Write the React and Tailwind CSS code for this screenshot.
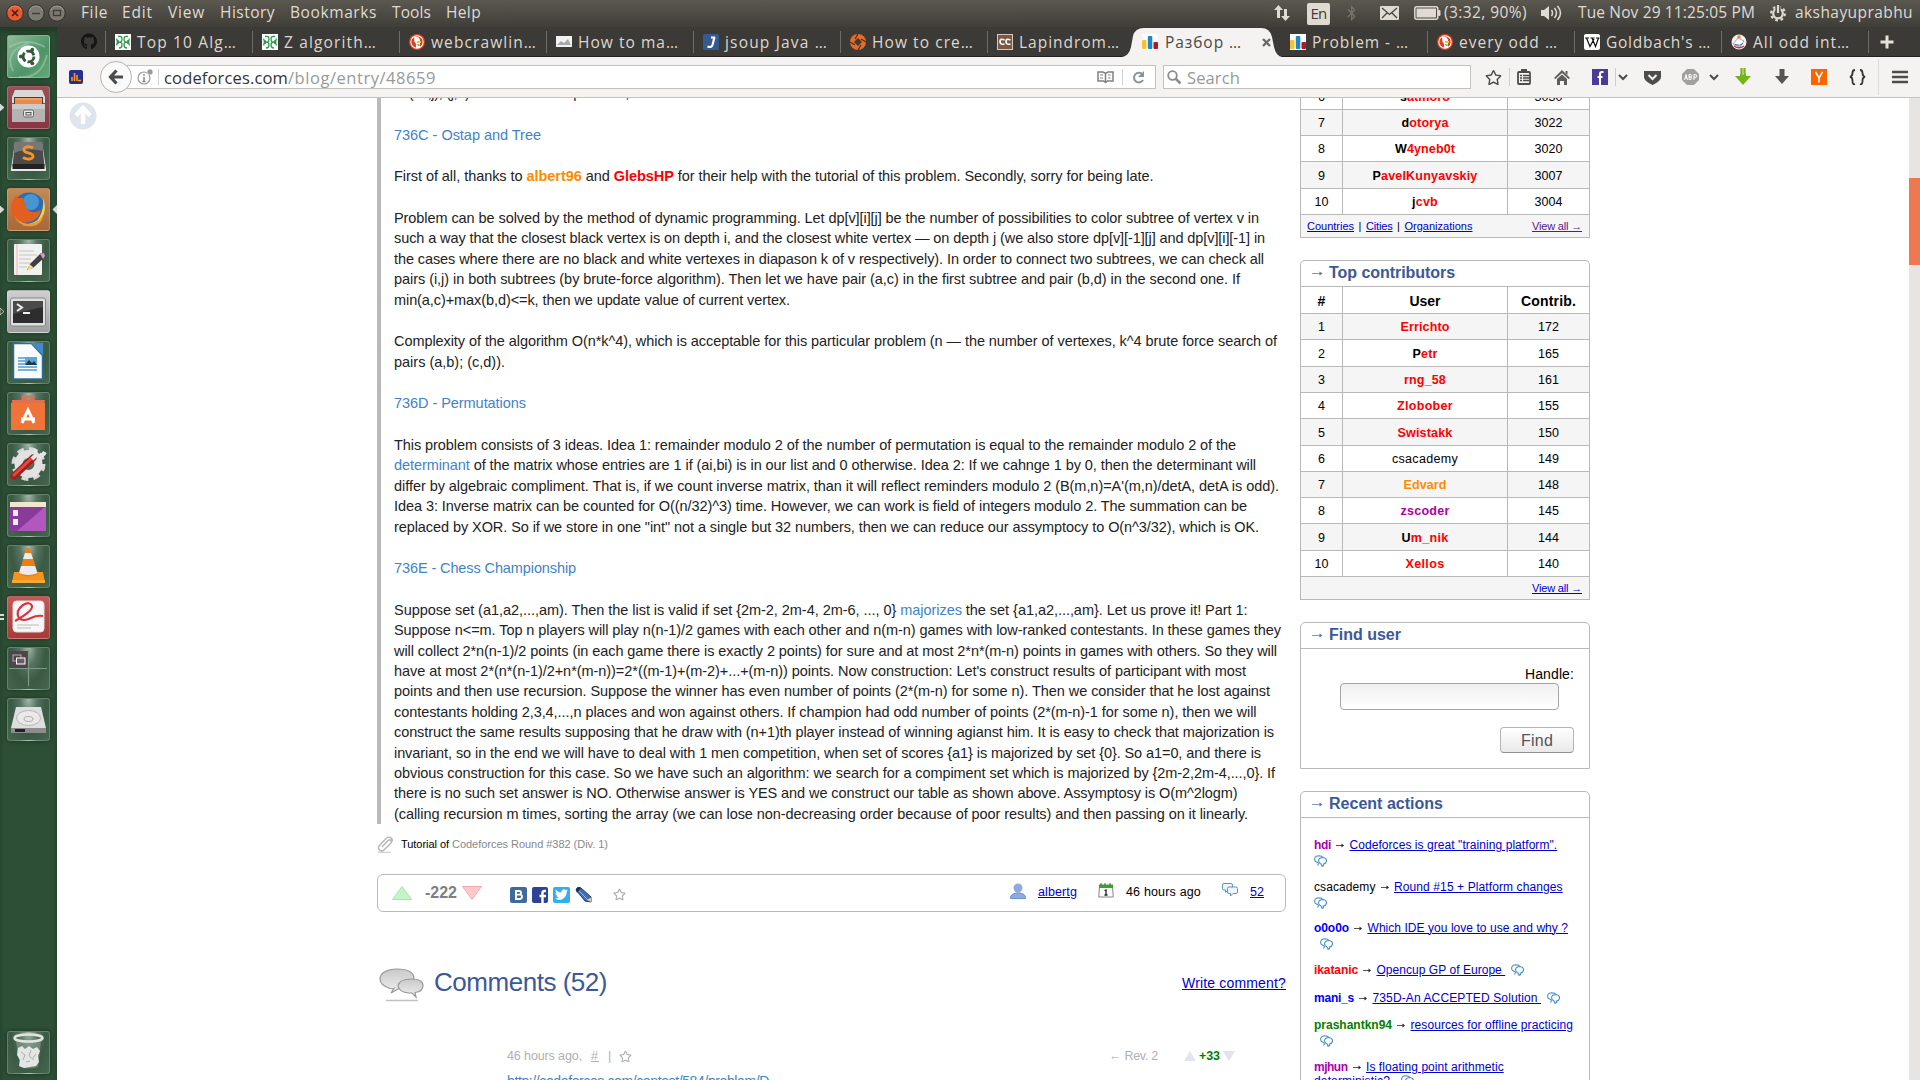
import React, { useLayoutEffect, useRef } from "react";
import { FaGithub, FaBluetoothB, FaRegStar, FaTwitter } from "react-icons/fa";

/* Text whose tracking is adjusted so that it spans exactly w pixels. */
function Fit({ w, className = "", children }) {
  const ref = useRef(null);
  useLayoutEffect(() => {
    const el = ref.current;
    el.style.letterSpacing = "0px";
    const natural = el.getBoundingClientRect().width;
    const n = el.textContent.length;
    if (n > 0) el.style.letterSpacing = (w - natural) / n + "px";
  });
  return (
    <span className="inline-block shrink-0 whitespace-pre" style={{ width: w }}>
      <span ref={ref} className={"whitespace-pre " + className}>{children}</span>
    </span>
  );
}

/* ---------- Desktop top bar ---------- */
const menus = [
  ["File", 27, 14], ["Edit", 31, 15], ["View", 37, 15], ["History", 55, 15],
  ["Bookmarks", 87, 15], ["Tools", 39, 15], ["Help", 35, 0],
];

function WindowButton({ kind }) {
  return (
    <svg width="18" height="18" viewBox="0 0 18 18">
      <circle cx="9" cy="9" r="8.2" fill={kind === "close" ? "#e8592b" : "#7d7a70"} stroke="#35332e" strokeWidth="1" />
      <path d="M2.5 6.5A7 7 0 0 1 15.500 6.500" fill="none" stroke="#fff" strokeOpacity=".25" />
      {kind === "close" && <path d="M6 6l6 6M12 6l-6 6" stroke="#3c2018" strokeWidth="1.6" />}
      {kind === "min" && <path d="M5 9.500h8" stroke="#3c3b37" strokeWidth="1.4" />}
      {kind === "max" && <rect x="5.500" y="6.500" width="7" height="5" fill="none" stroke="#3c3b37" strokeWidth="1.3" />}
    </svg>
  );
}

function MenuBar() {
  return (
    <div className="flex h-[27px] shrink-0 items-center bg-gradient-to-b from-[#5b5850] to-[#403e39] pb-[2px] text-[15.5px] leading-[25px] text-[#dfdbd2]">
      <div className="ml-[6px] mt-[1px] flex w-[75px] gap-[3px]">
        <WindowButton kind="close" /><WindowButton kind="min" /><WindowButton kind="max" />
      </div>
      {menus.map(([t, w, g]) => (
        <span key={t} className="flex" style={{ marginRight: g }}><Fit w={w}>{t}</Fit></span>
      ))}
      <div className="ml-auto flex h-[25px] items-center">
        <svg width="18" height="20" viewBox="0 0 18 20" fill="#dfdbd2" className="mr-[16px] mt-[1px]">
          <path d="M5.500 2L10 7H7v8H4V7H1zM12.500 18L8 13h3V6h3v7h3z" />
        </svg>
        <div className="mr-[15px] mt-[2px] flex h-[22px] w-[23px] items-center justify-center rounded-[2px] bg-[#dfdbd2] text-[15px] text-[#3c3b37]"><Fit w={16}>En</Fit></div>
        <FaBluetoothB className="mr-[22px] mt-[1px] h-[16px] w-[13px] text-[#77746b]" />
        <svg width="19" height="14" viewBox="0 0 19 14" className="mr-[15px] mt-[1px]">
          <rect width="19" height="14" rx="1" fill="#dfdbd2" />
          <path d="M2 2l7.500 6.500L17 2M2 12l5-5M17 12l-5-5" fill="none" stroke="#45433d" strokeWidth="1.3" />
        </svg>
        <svg width="27" height="14" viewBox="0 0 27 14" className="mr-[3px] mt-[1px]">
          <rect x=".8" y=".8" width="23" height="12.400" rx="2" fill="none" stroke="#dfdbd2" strokeWidth="1.500" />
          <rect x="2.500" y="2.500" width="19.500" height="9" fill="#dfdbd2" /><rect x="24" y="4" width="2.500" height="6" rx="1" fill="#dfdbd2" />
        </svg>
        <Fit w={83}>(3:32, 90%)</Fit>
        <svg width="24" height="18" viewBox="0 0 24 18" className="ml-[13px] mr-[14px] mt-[1px]" fill="none" stroke="#dfdbd2" strokeWidth="1.5">
          <path d="M1 6h3l5-4v14l-5-4H1z" fill="#dfdbd2" stroke="none" />
          <path d="M11.500 6q2 3 0 6M14.500 4q4 5 0 10M17.500 2q6 7 0 14" />
        </svg>
        <Fit w={177}>Tue Nov 29 11:25:05 PM</Fit>
        <svg width="18" height="18" viewBox="0 0 18 18" className="ml-[14px] mr-[8px] mt-[1px]" fill="none" stroke="#dfdbd2">
          <circle cx="9" cy="9.500" r="4.800" strokeWidth="2.200" />
          <circle cx="9" cy="9.500" r="6.900" strokeWidth="2.200" strokeDasharray="2.710 2.710" />
          <path d="M9 0v9" stroke="#4d4b44" strokeWidth="5" /><path d="M9 1v8" strokeWidth="2.200" />
        </svg>
        <span className="mr-[7px] flex"><Fit w={118}>akshayuprabhu</Fit></span>
      </div>
    </div>
  );
}

/* ---------- Launcher ---------- */
const launcher = [
  {
    bg: "linear-gradient(135deg,#8fbd9d,#4f9468 60%,#62a97b)",
    art: <g><path d="M2 12Q20 2 38 12M6 36Q-4 16 22 8M12 42Q34 44 40 20" stroke="#a9cfb5" strokeOpacity=".5" strokeWidth="2" fill="none" /><circle cx="21.500" cy="21.500" r="11" fill="#fff" /><circle cx="21.500" cy="21.500" r="5.400" fill="none" stroke="#35583f" strokeWidth="2.800" strokeDasharray="9.300 2" /><circle cx="13.800" cy="21.500" r="1.900" fill="#35583f" /><circle cx="25.300" cy="14.700" r="1.900" fill="#35583f" /><circle cx="25.300" cy="28.300" r="1.900" fill="#35583f" /></g>,
  },
  {
    bg: "linear-gradient(#9a5058,#8a3542)", left: "fill",
    art: <g><path d="M8 4h27l3 7v6H5v-6z" fill="#d9d8d6" /><path d="M7 11h29v8H7z" fill="#4c3f3a" /><path d="M8 12h27v2H8z" fill="#f0a066" /><path d="M8 14h27v5H8z" fill="#e88a48" /><path d="M5 18h33v18H5z" fill="#b5b4b3" /><path d="M5 18h33v5H5z" fill="#cbcac9" /><rect x="16.500" y="24" width="10" height="7" rx="1.500" fill="#e8e8e8" stroke="#666" /><rect x="19" y="26.500" width="5" height="2.500" fill="none" stroke="#555" /></g>,
  },
  {
    art: <g><path d="M8 5h27l4 27v2H4v-2z" fill="#e8e8e8" /><path d="M8 5h27l2.500 24h-32z" fill="#4a4a4a" /><path d="M8 5h27l1.500 9Q21 10 7 16z" fill="#777" /><path d="M5.500 27h32v5h-32z" fill="#222" /><path d="M26 11c-4-2.500-10-1.200-9 2.500 1 3 8.500 2 9 5.500.4 3.500-6 4-10 1.500" stroke="#f5932a" strokeWidth="2.800" fill="none" /></g>,
  },
  {
    bg: "linear-gradient(#c28a55,#a8683a)", left: "fill", right: true,
    art: <g><circle cx="22" cy="20.500" r="16" fill="#2a6cb5" /><circle cx="24" cy="14" r="8" fill="#5fb0e6" fillOpacity=".6" /><path d="M36 10q5 14-3 22-9 8-18 5 15-1 18-9 4-8 3-18z" fill="#f8d33c" /><path d="M6 12l3-5 2 3 6 0q-2 3-1 4l4 1-2 4q5 6 10 5 4 0 6-3-1 10-11 13Q11 37 6 28 2 20 6 12z" fill="#e2601f" /><path d="M7 27q6 11 19 8 8-2 10-9 0 10-10 12Q12 40 7 27z" fill="#f29a2e" /></g>,
  },
  {
    art: <g><rect x="7" y="5" width="28" height="31" rx="1" fill="#f1f1ef" /><path d="M10 5v31" stroke="#efb4b4" /><path d="M12 12h15M12 16h18M12 20h12M12 24h13M12 28h8" stroke="#c4c4c4" strokeWidth="1" /><path d="M20 31l3-6 11-11 4 4-12 11z" fill="#3f3f3f" /><path d="M20 32l2.500-7 4 3.500z" fill="#f0d789" /><path d="M33 15l4-1 1 3-2 3z" fill="#dd8fd0" /></g>,
  },
  {
    bg: "linear-gradient(#cfcfcf,#9e9e9e)", left: "open",
    art: <g><rect x="3.500" y="8" width="35" height="28" rx="2" fill="#dedede" stroke="#888" /><rect x="6" y="11" width="30" height="22" fill="#2d2d2d" /><path d="M6 11h30v6L6 24z" fill="#4a4a4a" /><path d="M10 14l5 3.500-5 3.500M16 23h7" stroke="#eee" strokeWidth="2" fill="none" /></g>,
  },
  {
    art: <g><path d="M6.500 2.500h18l11 12V38h-29z" fill="#f8fafc" stroke="#2a6da3" strokeWidth="1.500" /><path d="M24 2h12v12z" fill="#3d8bc8" /><path d="M11 17h7M11 20h7M11 23h7M11 26h19M11 29h19" stroke="#4f9cd4" strokeWidth="1.700" /><rect x="18" y="16" width="12" height="8" fill="#5ba7d8" /><path d="M18 24l4-5 3 3 2-2 3 4z" fill="#26383f" /></g>,
  },
  {
    art: <g><path d="M16 10V5h10v5" fill="none" stroke="#e2704e" strokeWidth="2.500" /><path d="M5 8h33l-1 5H5z" fill="#e2704e" /><rect x="4" y="11" width="34" height="27" fill="#f07338" /><path d="M15 31l6-13 6 13M14 27h14" fill="none" stroke="#fff" strokeWidth="3" /></g>,
  },
  {
    art: <g><circle cx="21.500" cy="21" r="14.500" fill="none" stroke="#d9d9d9" strokeWidth="5" strokeDasharray="6.500 4.890" /><circle cx="21.500" cy="21" r="10" fill="none" stroke="#e2e2e2" strokeWidth="8" /><path d="M7 33L26 15" stroke="#a81c1c" strokeWidth="7" strokeLinecap="round" /><path d="M7 32L25 15" stroke="#e04a42" strokeWidth="3" strokeLinecap="round" /><path d="M25 16l5-5M29 6q-2 5 3 7 4 0 6-4" stroke="#e5e5e5" strokeWidth="4" fill="none" /></g>,
  },
  {
    art: <g><rect x="3" y="8" width="36" height="29" rx="1.500" fill="#8a3a9a" /><path d="M10 37L39 12v25z" fill="#bd62c8" fillOpacity=".75" /><path d="M3 8h36v5H3z" fill="#eee8cf" /><path d="M6 16h5v6H6zM6 25h5v6H6z" fill="#f5eef7" /></g>,
  },
  {
    art: <g><path d="M7 27h29l2 11H5z" fill="#f5931e" /><path d="M5 35h33v3H5z" fill="#f7a833" /><path d="M19 4q2-2 4 0l8 25q-9 5-19 0z" fill="#ee7d18" /><path d="M18 8h6l2 6h-10zM14 21h14l2.500 7q-9 4-18.500 0z" fill="#ececec" /></g>,
  },
  {
    bg: "linear-gradient(#c25a58,#a83a3a)", left: "double",
    art: <g><rect x="6" y="5" width="31" height="31" rx="3.500" fill="#f7f7f7" stroke="#ddd" /><path d="M8 25Q26 15 25 10 23 5 16 9 8 15 12 22q4 4 12 0 6-3 12-2" stroke="#d9343a" strokeWidth="2.200" fill="none" /><path d="M10 29h22M10 32h14" stroke="#cfcfcf" strokeWidth="1.500" /></g>,
  },
  {
    art: <g><rect x="2" y="4" width="19" height="18" fill="#4d4548" /><path d="M21.500 2v37M2 21.500h38" stroke="#7d9a86" strokeWidth="1.200" /><rect x="6" y="8" width="8" height="6" fill="none" stroke="#b9a9b4" /><rect x="9.500" y="11" width="8.500" height="6" fill="#6d5a68" stroke="#fff" /></g>,
  },
  {
    art: <g><path d="M9 9h25l5 21H4z" fill="#dedede" /><path d="M4 30h35v5H4z" fill="#8d8d8d" /><path d="M8 31h10v3H8z" fill="#222" /><ellipse cx="21.500" cy="20" rx="12" ry="7.500" fill="#e9e9e9" stroke="#b8b8b8" /><ellipse cx="21.500" cy="21" rx="4.500" ry="2.500" fill="none" stroke="#aaa" /></g>,
  },
];
const trash = {
  art: <g><path d="M9 10h25l-3 26q-9 3-18 0z" fill="#9fb0a5" fillOpacity=".45" /><ellipse cx="21.500" cy="7" rx="14" ry="3.500" fill="none" stroke="#dfe5e1" strokeWidth="2.500" /><path d="M11 17l4-2 3 3 4-3 4 3 4-2 3 4-2 5 1 6-3 4-6 1-6 1-5-2 1-6-3-5z" fill="#e4e6e4" /><path d="M14 21l4 3-2 5M24 19l-2 6 5 4M29 23l-3 4M19 31l4-1" stroke="#a9afab" fill="none" /></g>,
};

function Tile({ item }) {
  return (
    <div className="relative ml-[7px] h-[43px] w-[43px] shrink-0">
      <div
        className="h-full w-full rounded-[3px] border border-[#ffffff33] shadow-[0_0_4px_#00000066]"
        style={{ background: item.bg || "radial-gradient(ellipse at 50% 0,#a3b8a9 0,#567361 30%,#3a5a44 60%,#45664f)" }}
      />
      <svg width="43" height="43" viewBox="0 0 43 43" className="absolute inset-0">{item.art}</svg>
      {item.left && (
        <svg width="5" height="9" viewBox="0 0 5 9" className="absolute -left-[7px] top-[17px]">
          {item.left === "double"
            ? <path d="M0 2h4M0 6h4" stroke="#ddd" strokeWidth="1.800" />
            : <path d="M0 1l4 3.500L0 8z" fill={item.left === "fill" ? "#d8dcd9" : "none"} stroke="#d8dcd9" strokeWidth=".8" />}
        </svg>
      )}
      {item.right && (
        <svg width="5" height="9" viewBox="0 0 5 9" className="absolute -right-[7px] top-[17px]"><path d="M5 0L.5 4.500 5 9z" fill="#d8dcd9" /></svg>
      )}
    </div>
  );
}

function Launcher() {
  return (
    <div className="flex w-[57px] shrink-0 flex-col gap-2 bg-[#2c4f35] pb-[6px] pt-[8px] shadow-[inset_0_5px_5px_#00000044]">
      {launcher.map((it, i) => <Tile key={i} item={it} />)}
      <div className="mt-auto"><Tile item={trash} /></div>
    </div>
  );
}

/* ---------- Browser chrome ---------- */
const favicon = {
  gfg: <g><rect width="16" height="16" fill="#fff" /><path d="M3 2.500Q7 1.500 7 5T4 8H1.500M4 8q3 0 3 3t-3 3M2 4.500Q1 7 4 7M2 11.500Q1 9 4 9M13 2.500Q9 1.500 9 5t3 3h2.500M12 8q-3 0-3 3t3 3M14 4.500Q15 7 12 7M14 11.500Q15 9 12 9" stroke="#2f9a46" fill="none" strokeWidth="1.300" /></g>,
  duck: <g><circle cx="8" cy="8" r="8" fill="#d9421e" /><circle cx="8" cy="8" r="6.700" fill="#fff" /><circle cx="8" cy="8" r="5.700" fill="#d9421e" /><path d="M5 3q5-1.500 6 3v8H7Q7.500 9 5.500 8z" fill="#fff" /><path d="M8 7h4v2H8z" fill="#f7c325" /><path d="M8 10l4 1-3 1z" fill="#3f9a3c" /></g>,
  img: <g><rect y="2" width="16" height="11" fill="#f2f2f2" /><path d="M1 11l4-4 3 2 4-4 3 6z" fill="#a7a9a9" /></g>,
  jsoup: <g><rect width="16" height="16" rx="1.500" fill="#36598f" /><path d="M11.500 3L9.500 11Q8.500 14 4.500 12.500M8 3.500h4" stroke="#fff" strokeWidth="2.200" fill="none" /></g>,
  hash: <g><circle cx="8" cy="8" r="8" fill="#ec6b23" /><path d="M8 4l4 4-4 4-4-4z" fill="#3c3b37" /><path d="M8 0L5 5M16 8l-5-3M8 16l3-5M0 8l5 3" stroke="#3c3b37" strokeWidth="1.300" /></g>,
  cc: <g><rect x=".5" y=".5" width="15" height="15" fill="#7a5844" stroke="#d8c9ba" /><path d="M7.500 6Q3 4 3 7.500T7.500 10M13.500 6Q9 4 9 7.500t4.500 2.500" fill="none" stroke="#fff" strokeWidth="1.700" /></g>,
  cf: <g><rect width="16" height="16" fill="#fff" /><rect x="0" y="6" width="4.500" height="9" rx="1" fill="#f4c430" /><rect x="5.800" y="2" width="4.500" height="13" rx="1" fill="#1f87c9" /><rect x="11.500" y="8" width="4.500" height="7" rx="1" fill="#b01822" /></g>,
  wiki: <g><rect width="16" height="16" rx="2" fill="#fff" /><path d="M1 4h4M6.500 4h4M12 4h3.500M2.500 4l3.500 8.500L10 5M8 4l3.500 8.500L14.500 4" stroke="#111" strokeWidth="1.200" fill="none" /></g>,
  math: <g><circle cx="8" cy="8" r="7.500" fill="#f5f2f0" /><path d="M2 10l5-6 6 3-4 6z" fill="#fff" stroke="#7d90c4" strokeWidth=".8" /><path d="M3 12q5 3.500 10 0" stroke="#c33" fill="none" strokeWidth="1.500" /><path d="M4 10.500q5 2 8-1" stroke="#3f62b0" fill="none" /><circle cx="8" cy="3" r="1.800" fill="#e08a3c" /></g>,
};

function Tab({ icon, label, w, width, last }) {
  return (
    <div className="flex h-full shrink-0 items-center" style={{ width }}>
      <div className={"h-[22px] w-px " + (last ? "bg-transparent" : "bg-[#6f6d67]")} />
      <svg width="16" height="16" viewBox="0 0 16 16" className="ml-[9px] mr-[6px]">{favicon[icon]}</svg>
      <Fit w={w}>{label}</Fit>
    </div>
  );
}

function TabStrip() {
  return (
    <div className="flex h-[30px] shrink-0 items-center border-b border-[#22211f] bg-[#3c3a36] text-[15.5px] leading-[30px] text-[#dcd8cf]">
      <div className="flex w-[48px] justify-end pr-[8px]"><FaGithub className="h-[17px] w-[16px] text-[#151515]" /></div>
      <Tab icon="gfg" label="Top 10 Alg…" w={100} width={147} />
      <Tab icon="gfg" label="Z algorith…" w={93} width={147} />
      <Tab icon="duck" label="webcrawlin…" w={106} width={147} />
      <Tab icon="img" label="How to ma…" w={101} width={147} />
      <Tab icon="jsoup" label="jsoup Java …" w={103} width={147} />
      <Tab icon="hash" label="How to cre…" w={102} width={147} />
      <Tab icon="cc" label="Lapindrom…" w={101} width={135} />
      <div className="relative z-10 -mb-px flex h-[30px] w-[160px] shrink-0 items-center">
        <svg width="160" height="30" viewBox="0 0 160 30" className="absolute inset-0">
          <path d="M0 30Q7 29 9 20L11 9Q13 1 22 1H139Q148 1 150 10L152 20Q154 29 160 30z" fill="#f4f3f1" />
        </svg>
        <svg width="16" height="16" viewBox="0 0 16 16" className="relative ml-[20px] mr-[7px]">{favicon.cf}</svg>
        <span className="relative flex text-[#4a4945]"><Fit w={77}>Разбор …</Fit></span>
        <svg width="9" height="9" viewBox="0 0 9 9" className="relative ml-[20px]"><path d="M1 1l7 7M8 1L1 8" stroke="#6b6a66" strokeWidth="2.400" /></svg>
      </div>
      <div className="relative z-20 -ml-[2px] flex h-full">
        <Tab icon="cf" label="Problem - …" w={97} width={147} last />
        <Tab icon="duck" label="every odd …" w={99} width={147} />
        <Tab icon="wiki" label="Goldbach's …" w={105} width={147} />
        <Tab icon="math" label="All odd int…" w={97} width={147} />
      </div>
      <div className="h-[22px] w-px bg-[#6f6d67]" />
      <svg width="14" height="14" viewBox="0 0 14 14" className="ml-[11px]"><path d="M7 .5v13M.5 7h13" stroke="#e6e3da" strokeWidth="3" /></svg>
    </div>
  );
}

const dark = "#4c4c4c";
function Chevron() {
  return <svg width="10" height="7" viewBox="0 0 10 7"><path d="M1 1l4 4 4-4" fill="none" stroke={dark} strokeWidth="2" /></svg>;
}
function Cell({ w, children }) {
  return <div className="flex h-full shrink-0 items-center justify-center" style={{ width: w }}>{children}</div>;
}

function Toolbar() {
  return (
    <div className="flex h-[41px] shrink-0 items-center border-b border-[#c4c2bf] bg-[#f4f3f1] text-[16.500px] leading-[22px]">
      <svg width="14" height="14" viewBox="0 0 14 14" className="ml-[12px]">
        <rect width="14" height="14" rx="2" fill="#2b2f8c" /><path d="M3 11V7M5.500 11V3M8 11V5M9 10.500h3" stroke="#f39a1e" strokeWidth="1.600" />
      </svg>
      <div className="relative z-10 ml-[17px] flex h-[32px] w-[32px] shrink-0 items-center justify-center rounded-full border border-[#b5b3b0] bg-[#fafafa]">
        <svg width="16" height="16" viewBox="0 0 16 16"><path d="M8.500 1.500L2.500 8l6 6.500M3 8h12" fill="none" stroke="#4a4a4a" strokeWidth="3.200" /></svg>
      </div>
      <div className="-ml-[10px] flex h-[24px] w-[1034px] shrink-0 items-center border border-[#c4c2bf] bg-white">
        <svg width="16" height="16" viewBox="0 0 16 16" className="ml-[14px]"><circle cx="7" cy="9" r="6" fill="none" stroke="#999" strokeWidth="1.200" /><circle cx="13" cy="3" r="3" fill="#999" stroke="#fff" strokeWidth=".6" /><path d="M7 8v4.500M7 5v1.800M5.500 12.500h3" stroke="#888" strokeWidth="1.500" /></svg>
        <div className="ml-[5px] mr-[5px] h-[16px] w-px bg-[#d0d0d0]" />
        <span className="pt-[2px] text-[#333]"><Fit w={124}>codeforces.com</Fit></span>
        <span className="pt-[2px] text-[#999]"><Fit w={148}>/blog/entry/48659</Fit></span>
        <svg width="17" height="14" viewBox="0 0 17 14" className="ml-auto" fill="none" stroke="#808080" strokeWidth="1.500"><path d="M8.500 12.500L6.500 11H1V2h5l2.500 1.500L11 2h5v9h-5.500zM8.500 4v8" /><path d="M3 5h3M3 8h3M11 5h2.500M11 8h2.500" strokeWidth="1" /></svg>
        <div className="ml-[8px] mr-[9px] h-[16px] w-px bg-[#d0d0d0]" />
        <svg width="13" height="13" viewBox="0 0 13 13" className="mr-[10px]"><path d="M10.500 3.500A4.800 4.800 0 1 0 11 9" fill="none" stroke="#8a9199" strokeWidth="2" /><path d="M12 0v6H6z" fill="#8a9199" /></svg>
      </div>
      <div className="ml-[7px] flex h-[24px] w-[308px] shrink-0 items-center border border-[#c4c2bf] bg-white">
        <svg width="15" height="15" viewBox="0 0 15 15" className="ml-[3px] mr-[5px]"><circle cx="5.500" cy="5.500" r="4.300" fill="none" stroke="#8c8c8c" strokeWidth="1.800" /><path d="M8.500 8.500l5 5" stroke="#8c8c8c" strokeWidth="2.500" /></svg>
        <span className="pt-[2px] text-[#999]"><Fit w={53}>Search</Fit></span>
      </div>
      <div className="ml-[13px] flex h-full items-center">
        <Cell w={18}><FaRegStar className="h-[17px] w-[17px]" color={dark} /></Cell>
        <Cell w={14}><div className="h-[18px] w-px bg-[#d0cecb]" /></Cell>
        <Cell w={16}><svg width="14" height="16" viewBox="0 0 14 16"><rect x="1" y="3" width="12" height="12" rx="1" fill="none" stroke={dark} strokeWidth="1.800" /><rect x="4" y="0" width="6" height="4" fill={dark} /><path d="M3 6.500h2M3 9h2M3 11.500h2M6 6.500h6M6 9h6M6 11.500h6" stroke={dark} strokeWidth="1.300" /></svg></Cell>
        <Cell w={60}><svg width="16" height="15" viewBox="0 0 16 15"><path d="M0 8L8 0l8 8-1.500 1L8 3 1.500 9zM3 9l5-4.500L13 9v6h-3v-4H6v4H3z" fill="#5d5d5d" /><path d="M11.500 1h2v4l-2-2z" fill="#5d5d5d" /></svg></Cell>
        <Cell w={16}><svg width="16" height="16" viewBox="0 0 16 16"><rect width="16" height="16" fill="#4a3c96" /><path d="M11.500 3H10Q8 3 8 5v11M5.500 8h5" stroke="#fff" strokeWidth="2" fill="none" /></svg></Cell>
        <div className="ml-[7px] h-[18px] w-px bg-[#d0cecb]" />
        <Cell w={14}><Chevron /></Cell>
        <Cell w={44}><svg width="17" height="15" viewBox="0 0 17 15"><path d="M0 1h17v6q0 4-8.500 8Q0 11 0 7z" fill={dark} /><path d="M4.500 5l4 4 4-4" stroke="#f4f3f1" fill="none" strokeWidth="2" /></svg></Cell>
        <div className="ml-[7px]"><Cell w={18}><svg width="17" height="16" viewBox="0 0 17 16"><path d="M5 0h7l5 5v6l-5 5H5l-5-5V5z" fill="#a0a0a0" /><path d="M2.500 11l1.500-5.500L5.500 11M3 9h2M7 10.500v-5q3 0 3 1.200T7 8q3 0 3 1.300T7 10.500M12 11V5.500q3 0 3 1.500t-3 1.500" stroke="#fff" fill="none" /></svg></Cell></div>
        <Cell w={30}><Chevron /></Cell>
        <Cell w={28}><svg width="16" height="18" viewBox="0 0 16 18"><path d="M5 0h6v8h5l-8 9-8-9h5z" fill="#72b615" /><path d="M5 0v6M8 0v7M11 0v6" stroke="#f4f3f1" strokeWidth=".8" /></svg></Cell>
        <Cell w={49}><svg width="14" height="16" viewBox="0 0 14 16"><path d="M4.500 0h5v7H14l-7 8-7-8h4.500z" fill="#555" /></svg></Cell>
        <Cell w={26}><svg width="16" height="16" viewBox="0 0 16 16"><rect width="16" height="16" fill="#fb6500" /><path d="M4.500 3L8 9l3.500-6M8 9v4.500" stroke="#fff" strokeWidth="1.500" fill="none" /></svg></Cell>
        <Cell w={50}><svg width="17" height="16" viewBox="0 0 17 16"><path d="M6 1Q3.500 1 3.500 4T1 8q2.500 0 2.500 4T6 15M11 1q2.500 0 2.500 3T16 8q-2.500 0-2.500 4T11 15" fill="none" stroke="#333" strokeWidth="1.800" /></svg></Cell>
        <div className="-ml-[4px] h-[36px] w-px bg-[#dddbd8]" />
        <Cell w={41}><svg width="16" height="14" viewBox="0 0 16 14"><path d="M0 2h16M0 7h16M0 12h16" stroke={dark} strokeWidth="2.600" /></svg></Cell>
      </div>
    </div>
  );
}

/* ---------- Article ---------- */
const L = ({ children }) => <span className="text-[#4183c9]">{children}</span>;
const paragraphs = [
  [[147, <L>736C - Ostap and Tree</L>]],
  [[759.500, <>First of all, thanks to <b className="text-[#ff8c00]">albert96</b> and <b className="text-[#ff0000]">GlebsHP</b> for their help with the tutorial of this problem. Secondly, sorry for being late.</>]],
  [
    [865, "Problem can be solved by the method of dynamic programming. Let dp[v][i][j] be the number of possibilities to color subtree of vertex v in"],
    [871, "such a way that the closest black vertex is on depth i, and the closest white vertex — on depth j (we also store dp[v][-1][j] and dp[v][i][-1] in"],
    [870, "the cases where there are no black and white vertexes in diapason k of v respectively). In order to connect two subtrees, we can check all"],
    [846, "pairs (i,j) in both subtrees (by brute-force algorithm). Then let we have pair (a,c) in the first subtree and pair (b,d) in the second one. If"],
    [396, "min(a,c)+max(b,d)<=k, then we update value of current vertex."],
  ],
  [
    [883, "Complexity of the algorithm O(n*k^4), which is acceptable for this particular problem (n — the number of vertexes, k^4 brute force search of"],
    [111, "pairs (a,b); (c,d))."],
  ],
  [[132, <L>736D - Permutations</L>]],
  [
    [842, "This problem consists of 3 ideas. Idea 1: remainder modulo 2 of the number of permutation is equal to the remainder modulo 2 of the"],
    [862, <><L>determinant</L> of the matrix whose entries are 1 if (ai,bi) is in our list and 0 otherwise. Idea 2: If we cahnge 1 by 0, then the determinant will</>],
    [885, "differ by algebraic compliment. That is, if we count inverse matrix, than it will reflect reminders modulo 2 (B(m,n)=A'(m,n)/detA, detA is odd)."],
    [853, "Idea 3: Inverse matrix can be counted for O((n/32)^3) time. However, we can work is field of integers modulo 2. The summation can be"],
    [865, "replaced by XOR. So if we store in one \"int\" not a single but 32 numbers, then we can reduce our assymptocy to O(n^3/32), which is OK."],
  ],
  [[182, <L>736E - Chess Championship</L>]],
  [
    [853.500, <>Suppose set (a1,a2,...,am). Then the list is valid if set {"{2m-2, 2m-4, 2m-6, ..., 0}"} <L>majorizes</L> the set {"{a1,a2,...,am}"}. Let us prove it! Part 1:</>],
    [887, "Suppose n<=m. Top n players will play n(n-1)/2 games with each other and n(m-n) games with low-ranked contestants. In these games they"],
    [883, "will collect 2*n(n-1)/2 points (in each game there is exactly 2 points) for sure and at most 2*n*(m-n) points in games with others. So they will"],
    [852, "have at most 2*(n*(n-1)/2+n*(m-n))=2*((m-1)+(m-2)+...+(m-n)) points. Now construction: Let's construct results of participant with most"],
    [876, "points and then use recursion. Suppose the winner has even number of points (2*(m-n) for some n). Then we consider that he lost against"],
    [862.500, "contestants holding 2,3,4,...,n places and won against others. If champion had odd number of points (2*(m-n)-1 for some n), then we will"],
    [880, "construct the same results supposing that he draw with (n+1)th player instead of winning agianst him. It is easy to check that majorization is"],
    [867, "invariant, so in the end we will have to deal with 1 men competition, when set of scores {a1} is majorized by set {0}. So a1=0, and there is"],
    [881, "obvious construction for this case. So we have such an algorithm: we search for a compiment set which is majorized by {2m-2,2m-4,...,0}. If"],
    [843.500, "there is no such set answer is NO. Otherwise answer is YES and we construct our table as shown above. Assymptosy is O(m^2logm)"],
    [854, "(calling recursion m times, sorting the array (we can lose non-decreasing order because of poor results) and then passing on it linearly."],
  ],
];

function Article() {
  return (
    <div className="flex h-[726px] flex-col justify-end gap-[21.400px] overflow-hidden border-l-4 border-[#b9b9b9] pl-[13px] text-[14.500px] leading-[20.370px] text-[#222]">
      <div className="shrink-0"><Fit w={235}>{"    (i.e,j), (j,e)                            p            ,"}</Fit></div>
      {paragraphs.map((p, i) => (
        <div key={i} className="shrink-0">
          {p.map(([w, t], j) => <div key={j} className="h-[20.370px]"><Fit w={w}>{t}</Fit></div>)}
        </div>
      ))}
    </div>
  );
}

function Bubbles({ w, h }) {
  return (
    <svg width={w} height={h} viewBox="0 0 16 14" fill="#eef5fc" stroke="#5b93c9" strokeWidth="1">
      <path d="M2 1h7q1.500 0 1.500 1.500V6q0 1.500-1.500 1.500H6L3.500 10V7.500H2Q.5 7.500.5 6V2.500Q.5 1 2 1z" />
      <path d="M7 4.500h7q1.500 0 1.500 1.500v3.500q0 1.500-1.500 1.500h-3l-2.500 2.500V11H7q-1.500 0-1.500-1.500V6Q5.500 4.500 7 4.500z" />
    </svg>
  );
}

function ActionBubbles() {
  return (
    <svg width="13" height="12" viewBox="0 0 13 12" fill="#fff" stroke="#4a90c8" strokeWidth="1.100">
      <path d="M4 7.500Q.6 7 .6 4 1 .8 5 .7 8 .7 9 2.500M4 7.500Q5 9 3.500 10.500" />
      <path d="M9 2.500q3.500.5 3.500 3.200T9.500 9q.5 2-1.500 2.300Q8 10 7 9 4.500 8 4.500 5.500 5 2.500 9 2.500z" />
    </svg>
  );
}

function VoteBar() {
  return (
    <div className="mt-[20px] flex h-[38px] items-center rounded-[6px] border border-[#b9b9b9]">
      <svg width="20" height="14" viewBox="0 0 20 14" className="ml-[14px]"><path d="M10 .5L19.500 13.500H.5z" fill="#c3f5c6" stroke="#a9e0ad" /></svg>
      <span className="ml-[13px] text-[16px] font-bold text-[#808080]"><Fit w={32}>-222</Fit></span>
      <svg width="20" height="14" viewBox="0 0 20 14" className="ml-[5px]"><path d="M10 13.500L.5.500h19z" fill="#ffc9cb" stroke="#f5aaac" /></svg>
      <div className="ml-[28px] flex h-full items-center gap-[5px] pt-[3px]">
        <svg width="17" height="16" viewBox="0 0 17 16"><rect width="17" height="16" rx="2" fill="#3e6a9c" /><path d="M6 4h3.500q1.500 0 1.500 1.800T9.500 7.600H6zm0 3.600h4q2 0 2 2T10 12H6z" fill="none" stroke="#fff" strokeWidth="1.900" /></svg>
        <svg width="16" height="16" viewBox="0 0 16 16"><rect width="16" height="16" rx="2" fill="#2c4493" /><path d="M14 4h-1.500q-2 0-2 2v10M7.500 9H14" stroke="#fff" strokeWidth="2.400" fill="none" /></svg>
        <div className="flex h-[16px] w-[17px] items-center justify-center rounded-[2px] bg-[#2db0f2]"><FaTwitter className="h-[13px] w-[13px] text-white" /></div>
        <svg width="17" height="16" viewBox="0 0 17 16"><path d="M1 3Q2-1 6 1l10 9v5l-6-1z" fill="#3a72b4" stroke="#1f3f70" /><path d="M1 3Q2-1 6 1L2 6z" fill="#1d3050" /><path d="M4 4l9 9" stroke="#8fb8e6" /><path d="M16 15v-4.500L12 13z" fill="#efc98a" /></svg>
      </div>
      <FaRegStar className="ml-[21px] mt-[2px] h-[13px] w-[13px] text-[#aaa]" />
      <div className="mr-[21px] ml-auto flex items-center pb-[2px] text-[12.500px] leading-[18px] text-black">
        <svg width="16" height="16" viewBox="0 0 16 16" className="mb-[3px]"><circle cx="8" cy="5" r="4.500" fill="#8faadf" /><path d="M.5 15.500Q0 11 6 10h4q6 1 5.500 5.500z" fill="#8faadf" stroke="#6f92d4" /></svg>
        <span className="ml-[12px] text-[#0000cc]"><Fit w={39} className="underline">albertg</Fit></span>
        <svg width="16" height="15" viewBox="0 0 16 15" className="mb-[3px] ml-[21px]"><path d="M1.500 4h13l.8 10H.7z" fill="#fafafa" stroke="#888" /><path d="M1 1.500h14V5H1z" fill="#39a329" /><path d="M3 0v2.500M7 0v2.500M12 0v2.500" stroke="#555" /><path d="M6.500 7.500L8 7v5M6.500 12h3" stroke="#222" strokeWidth="1.300" fill="none" /></svg>
        <span className="ml-[12px]"><Fit w={75}>46 hours ago</Fit></span>
        <span className="mb-[5px] ml-[21px]"><Bubbles w={16} h={15} /></span>
        <span className="ml-[12px] text-[#0000cc]"><Fit w={14} className="underline">52</Fit></span>
      </div>
    </div>
  );
}

function MainColumn() {
  return (
    <div className="ml-[280px] w-[909px] shrink-0">
      <Article />
      <div className="mt-[10px] flex h-[20px] items-center text-[11px] leading-[20px] text-black">
        <svg width="17" height="17" viewBox="0 0 17 17" className="mr-[7px]" fill="none" stroke="#b5b5b5" strokeWidth="1.400"><path d="M5 11l6-6.500q2-1.500 3 0t-.5 3L7 14q-2.500 2-4.500 0t0-4.500L9 2.500q2.500-2 4.500-1t2 4" /><path d="M1 16.300h13" strokeWidth=".8" /></svg>
        <Fit w={48}>Tutorial of</Fit>
        <span className="ml-[3px] text-[#888]"><Fit w={156}>Codeforces Round #382 (Div. 1)</Fit></span>
      </div>
      <VoteBar />
      <div className="mt-[48px] flex h-[44px] items-center">
        <svg width="45" height="34" viewBox="0 0 45 34" className="ml-[2px] mt-[6px]" stroke="#989898" strokeWidth="1.200">
          <defs><linearGradient id="cb" x1="0" y1="0" x2="0" y2="1"><stop offset="0" stopColor="#c9c9c9" /><stop offset="1" stopColor="#efefef" /></linearGradient></defs>
          <path d="M18 1C8 1 1 5 1 11q0 6 10 9.500 3 .5 4 0L12 25l8-4.500Q35 19 35 11 35 1 18 1z" fill="url(#cb)" />
          <path d="M32 11q-12 0-13 7 1 6 11 7h3l4 4-1-4.500q8-1 8-7Q44 11 32 11z" fill="url(#cb)" />
          <path d="M7 32.500h32" strokeOpacity=".6" strokeWidth="1.500" />
        </svg>
        <span className="ml-[10px] text-[26px] leading-[30px] text-[#3b5998]"><Fit w={173}>Comments (52)</Fit></span>
        <span className="ml-auto mt-[2px] text-[14px] leading-[20px] text-[#0000cc]"><Fit w={104} className="underline">Write comment?</Fit></span>
      </div>
      <div className="mt-[42px] flex h-[20px] items-center pl-[130px] text-[12.500px] leading-[20px] text-[#b0b0b0]">
        <Fit w={75}>46 hours ago,</Fit>
        <span className="ml-[9px]"><Fit w={8} className="underline">#</Fit></span>
        <span className="ml-[9px]">|</span>
        <FaRegStar className="ml-[8px] h-[13px] w-[13px]" />
        <span className="ml-auto"><Fit w={49}>← Rev. 2</Fit></span>
        <svg width="12" height="10" viewBox="0 0 12 10" className="ml-[26px]"><path d="M6 0l6 10H0z" fill="#e2e4f2" /></svg>
        <b className="ml-[3px] text-[#008000]"><Fit w={21}>+33</Fit></b>
        <svg width="12" height="10" viewBox="0 0 12 10" className="ml-[3px] mr-[51px]"><path d="M6 10L0 0h12z" fill="#e2e4f2" /></svg>
      </div>
      <div className="h-[20px] pl-[130px] pt-[5px] text-[14px] leading-[20px]"><L><Fit w={262}>http://codeforces.com/contest/584/problem/D</Fit></L></div>
    </div>
  );
}

/* ---------- Sidebar ---------- */
const R = "text-[#ff0000]";
const rated = [
  ["6", "s", "atmoro", R, 50, "3030", 26], ["7", "d", "otorya", R, 47, "3022", 26],
  ["8", "W", "4yneb0t", R, 60, "3020", 26], ["9", "P", "avelKunyavskiy", R, 105, "3007", 27], ["10", "j", "cvb", R, 26, "3004", 26],
];
const contributors = [
  ["1", "", "Errichto", R, 49, "172", 26], ["2", "P", "etr", R, 25, "165", 27], ["3", "", "rng_58", R, 42, "161", 26],
  ["4", "", "Zlobober", R, 56, "155", 26], ["5", "", "Swistakk", R, 55, "150", 27], ["6", "", "csacademy", "font-normal text-black", 66, "149", 26],
  ["7", "", "Edvard", "text-[#ff8c00]", 43, "148", 26], ["8", "", "zscoder", "text-[#aa00aa]", 49, "145", 26],
  ["9", "U", "m_nik", R, 47, "144", 27], ["10", "", "Xellos", R, 39, "140", 26],
];

function Row({ r, shade }) {
  const [n, first, rest, color, w, val, h] = r;
  return (
    <div className={"grid grid-cols-[42px_165px_1fr] border-b border-[#b9b9b9] text-center text-[12.500px] text-black " + (shade ? "bg-[#f5f5f5]" : "bg-white")} style={{ height: h }}>
      <div className="flex items-center justify-center border-r border-[#b9b9b9] pt-[2px]">{n}</div>
      <div className="flex items-center justify-center border-r border-[#b9b9b9] pt-[2px] font-bold"><Fit w={w}>{first}<span className={color}>{rest}</span></Fit></div>
      <div className="flex items-center justify-center pt-[2px]">{val}</div>
    </div>
  );
}

function Heading({ children, w }) {
  return (
    <div className="flex h-[26px] items-center border-b border-[#b9b9b9] pl-[11px] pb-[1px] text-[16px] leading-[24px] font-bold text-[#3b5998]">
      <svg width="11" height="7" viewBox="0 0 11 7" className="mr-[6px]"><path d="M0 3.500h9" stroke="#8496c0" /><path d="M7.500 1.500l3 2-3 2z" fill="#5a75ab" /></svg>
      <Fit w={w}>{children}</Fit>
    </div>
  );
}

function Arrow() {
  return <svg width="18.500" height="6" viewBox="0 0 18.500 6" className="shrink-0"><path d="M5 3.500h6.500" stroke="#555" strokeWidth="1" /><path d="M10.500 1.500l2.500 2-2.500 2z" fill="#222" /></svg>;
}

const actions = [
  { n: "hdi", c: "font-bold text-[#aa00aa]", nw: 17, t: "Codeforces is great \"training platform\".", w: 207.7, below: 0, h: 42 },
  { n: "csacademy", c: "text-black", nw: 61.5, t: "Round #15 + Platform changes", w: 168.7, below: 0, h: 41 },
  { n: "o0o0o", c: "font-bold text-[#0000ff]", nw: 35, t: "Which IDE you love to use and why ?", w: 200.500, below: 6, h: 42 },
  { n: "ikatanic", c: "font-bold text-[#ff0000]", nw: 44, t: "Opencup GP of Europe ", w: 128.7, h: 28 },
  { n: "mani_s", c: "font-bold text-[#0000ff]", nw: 40, t: "735D-An ACCEPTED Solution ", w: 168.500, h: 27 },
  { n: "prashantkn94", c: "font-bold text-[#008000]", nw: 78, t: "resources for offline practicing", w: 162.500, below: 6, h: 42 },
  { n: "mjhun", c: "font-bold text-[#aa00aa]", nw: 33.500, t: "Is floating point arithmetic", w: 137.700, more: true, h: 42 },
];

function Sidebar() {
  return (
    <div className="ml-[14px] w-[290px] shrink-0 text-black">
      <div className="-mt-[14px] border-x border-[#b9b9b9]">
        {rated.map((r, i) => <Row key={i} r={r} shade={i % 2 === 1} />)}
        <div className="flex h-[23px] items-center border-b border-[#b9b9b9] bg-[#f5f5f5] px-[6px] text-[11px] text-[#0000cc]">
          <Fit w={47} className="underline">Countries</Fit><span className="w-[12px] text-center text-black">|</span>
          <Fit w={26.500} className="underline">Cities</Fit><span className="w-[12px] text-center text-black">|</span>
          <Fit w={68} className="underline">Organizations</Fit>
          <span className="mr-[1px] ml-auto text-[#551a8b]"><Fit w={50} className="underline">View all →</Fit></span>
        </div>
      </div>

      <div className="mt-[22px] rounded-t-[5px] border border-b-0 border-[#b9b9b9]">
        <Heading w={126}>Top contributors</Heading>
        <div className="grid h-[27px] grid-cols-[42px_165px_1fr] border-b border-[#b9b9b9] text-[14px] font-bold">
          <div className="flex items-center justify-center border-r border-[#b9b9b9] pt-[2px]">#</div>
          <div className="flex items-center justify-center border-r border-[#b9b9b9] pt-[2px]"><Fit w={31}>User</Fit></div>
          <div className="flex items-center justify-center pt-[2px]"><Fit w={55}>Contrib.</Fit></div>
        </div>
        {contributors.map((r, i) => (
          <div key={i} className={i === 5 ? "border-t border-[#b9b9b9] -mt-px" : ""}><Row r={r} shade={i % 2 === 0} /></div>
        ))}
        <div className="flex h-[23px] items-center justify-end border-b border-[#b9b9b9] bg-[#f5f5f5] pr-[7px] text-[11px] text-[#0000cc]"><Fit w={50} className="underline">View all →</Fit></div>
      </div>

      <div className="mt-[22px] h-[147px] rounded-t-[5px] border border-[#b9b9b9]">
        <Heading w={72}>Find user</Heading>
        <div className="mt-[15px] flex h-[20px] justify-end pr-[15px] text-[14px] leading-[20px]"><Fit w={49}>Handle:</Fit></div>
        <div className="ml-[39px] -mt-px h-[27px] w-[219px] rounded-[4px] border border-[#a5a5a5] bg-gradient-to-b from-[#f0f0f0] to-white" />
        <div className="mt-[17px] mr-[15px] ml-auto flex h-[26px] w-[74px] items-center justify-center rounded-[4px] border border-[#b5b5b5] border-b-[#8f8f8f] bg-gradient-to-b from-white to-[#e9e9e9] pt-[2px] text-[16px] text-[#555]"><Fit w={32}>Find</Fit></div>
      </div>

      <div className="mt-[22px] h-[320px] rounded-t-[5px] border border-[#b9b9b9]">
        <Heading w={114}>Recent actions</Heading>
        <div className="pt-[18px] pl-[13px] text-[12px] leading-[16px]">
          {actions.map((a) => (
            <div key={a.n} style={{ height: a.h }}>
              <div className="flex h-[17px] items-center">
                <span className={a.c}><Fit w={a.nw}>{a.n}</Fit></span>
                <Arrow />
                <span className="text-[#0000cc]"><Fit w={a.w} className="underline">{a.t}</Fit></span>
                {a.below === undefined && !a.more && <span className="ml-[6px]"><ActionBubbles /></span>}
              </div>
              {a.below !== undefined && <div className="pt-[2px]" style={{ paddingLeft: a.below }}><ActionBubbles /></div>}
              {a.more && <div className="mt-[-2px] flex items-center gap-[11px] text-[#0000cc]"><Fit w={76} className="underline">deterministic?</Fit><ActionBubbles /></div>}
            </div>
          ))}
        </div>
      </div>
    </div>
  );
}

export default function App() {
  return (
    <div className="flex h-[1080px] w-[1920px] flex-col overflow-hidden bg-white [font-family:'Open_Sans','Noto_Sans',sans-serif]">
      <MenuBar />
      <div className="flex min-h-0 flex-1">
        <Launcher />
        <div className="flex min-w-0 flex-1 flex-col">
          <TabStrip />
          <Toolbar />
          <div className="flex min-h-0 flex-1 overflow-hidden bg-white [font-family:'Liberation_Sans',Arial,sans-serif]">
            <div className="ml-[12px] w-[28px] shrink-0 pt-[4px]">
              <svg width="28" height="28" viewBox="0 0 28 28"><circle cx="14" cy="14" r="13.500" fill="#dfe5ec" /><path d="M14 6v16M7 13.500l7-7.500 7 7.500" stroke="#fff" strokeWidth="4.500" fill="none" /></svg>
            </div>
            <MainColumn />
            <Sidebar />
            <div className="ml-auto w-[11px] shrink-0 bg-[#e6e5e4] pt-[80px]"><div className="h-[87px] bg-[#ee7850]" /></div>
          </div>
        </div>
      </div>
    </div>
  );
}
